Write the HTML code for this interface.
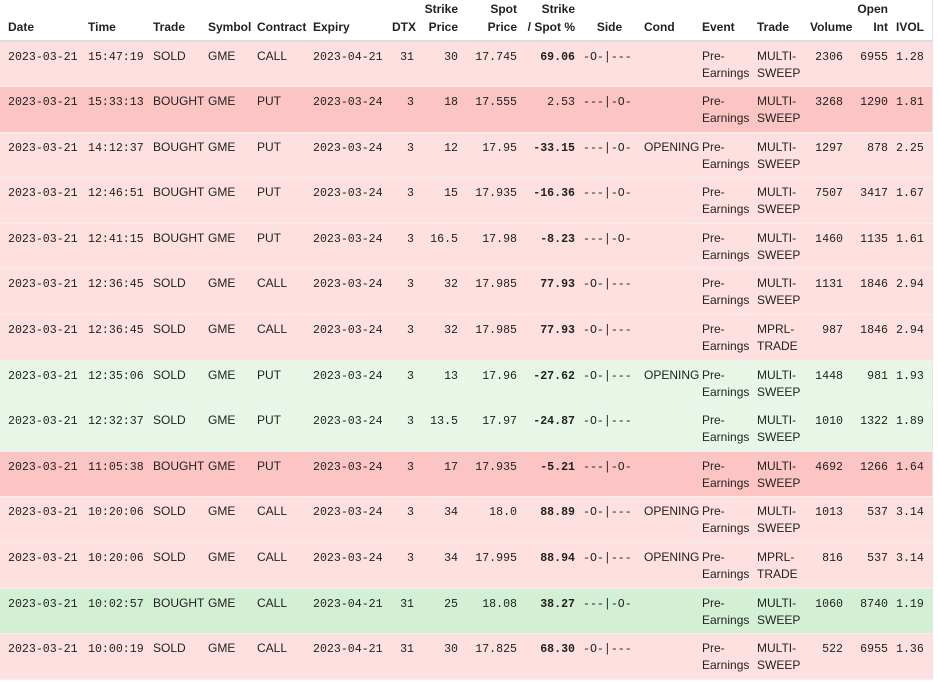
<!DOCTYPE html>
<html><head><meta charset="utf-8"><style>
body{margin:0;background:#fff;width:938px;height:682px;overflow:hidden}
table{border-collapse:collapse;table-layout:fixed;width:932px;font-family:"Liberation Sans",sans-serif;font-size:12px;color:#222;border-right:1px solid #e4e4e4}
th{font-weight:bold;vertical-align:bottom;padding:0 4px 4px 4px;line-height:18px;text-align:left;border-bottom:2px solid #ddd;white-space:nowrap}
td{height:45.6px;vertical-align:baseline;padding:6px 4px 0 4px;line-height:17px;box-sizing:border-box;border-bottom:1px solid #f0f0f0;white-space:nowrap}
td.m{font-family:"Liberation Mono",monospace;font-size:11.6px}
.r{text-align:right}
td.b{font-weight:bold}
th:first-child,td:first-child{padding-left:8px}
tr.lp td{background:#fde0df}
tr.sp td{background:#fcc5c4}
tr.lg td{background:#e8f6e8}
tr.sg td{background:#d4f0d4}
</style></head><body>
<table>
<colgroup><col style="width:84px"><col style="width:65px"><col style="width:55px"><col style="width:49px"><col style="width:56px"><col style="width:79px"><col style="width:30px"><col style="width:44px"><col style="width:59px"><col style="width:58px"><col style="width:61px"><col style="width:58px"><col style="width:55px"><col style="width:53px"><col style="width:41px"><col style="width:45px"><col style="width:40px"></colgroup>
<tr><th>Date</th><th>Time</th><th>Trade</th><th>Symbol</th><th>Contract</th><th>Expiry</th><th class="r">DTX</th><th class="r">Strike<br>Price</th><th class="r">Spot<br>Price</th><th class="r">Strike<br>/ Spot %</th><th style="text-align:center">Side</th><th>Cond</th><th>Event</th><th>Trade</th><th class="r">Volume</th><th class="r">Open<br>Int</th><th>IVOL</th></tr>
<tr class="lp"><td class="m">2023-03-21</td><td class="m">15:47:19</td><td>SOLD</td><td>GME</td><td>CALL</td><td class="m">2023-04-21</td><td class="m r">31</td><td class="m r">30</td><td class="m r">17.745</td><td class="m r b">69.06</td><td class="m">-O-|---</td><td></td><td>Pre-<br>Earnings</td><td>MULTI-<br>SWEEP</td><td class="m r">2306</td><td class="m r">6955</td><td class="m">1.28</td></tr>
<tr class="sp"><td class="m">2023-03-21</td><td class="m">15:33:13</td><td>BOUGHT</td><td>GME</td><td>PUT</td><td class="m">2023-03-24</td><td class="m r">3</td><td class="m r">18</td><td class="m r">17.555</td><td class="m r">2.53</td><td class="m">---|-O-</td><td></td><td>Pre-<br>Earnings</td><td>MULTI-<br>SWEEP</td><td class="m r">3268</td><td class="m r">1290</td><td class="m">1.81</td></tr>
<tr class="lp"><td class="m">2023-03-21</td><td class="m">14:12:37</td><td>BOUGHT</td><td>GME</td><td>PUT</td><td class="m">2023-03-24</td><td class="m r">3</td><td class="m r">12</td><td class="m r">17.95</td><td class="m r b">-33.15</td><td class="m">---|-O-</td><td>OPENING</td><td>Pre-<br>Earnings</td><td>MULTI-<br>SWEEP</td><td class="m r">1297</td><td class="m r">878</td><td class="m">2.25</td></tr>
<tr class="lp"><td class="m">2023-03-21</td><td class="m">12:46:51</td><td>BOUGHT</td><td>GME</td><td>PUT</td><td class="m">2023-03-24</td><td class="m r">3</td><td class="m r">15</td><td class="m r">17.935</td><td class="m r b">-16.36</td><td class="m">---|-O-</td><td></td><td>Pre-<br>Earnings</td><td>MULTI-<br>SWEEP</td><td class="m r">7507</td><td class="m r">3417</td><td class="m">1.67</td></tr>
<tr class="lp"><td class="m">2023-03-21</td><td class="m">12:41:15</td><td>BOUGHT</td><td>GME</td><td>PUT</td><td class="m">2023-03-24</td><td class="m r">3</td><td class="m r">16.5</td><td class="m r">17.98</td><td class="m r b">-8.23</td><td class="m">---|-O-</td><td></td><td>Pre-<br>Earnings</td><td>MULTI-<br>SWEEP</td><td class="m r">1460</td><td class="m r">1135</td><td class="m">1.61</td></tr>
<tr class="lp"><td class="m">2023-03-21</td><td class="m">12:36:45</td><td>SOLD</td><td>GME</td><td>CALL</td><td class="m">2023-03-24</td><td class="m r">3</td><td class="m r">32</td><td class="m r">17.985</td><td class="m r b">77.93</td><td class="m">-O-|---</td><td></td><td>Pre-<br>Earnings</td><td>MULTI-<br>SWEEP</td><td class="m r">1131</td><td class="m r">1846</td><td class="m">2.94</td></tr>
<tr class="lp"><td class="m">2023-03-21</td><td class="m">12:36:45</td><td>SOLD</td><td>GME</td><td>CALL</td><td class="m">2023-03-24</td><td class="m r">3</td><td class="m r">32</td><td class="m r">17.985</td><td class="m r b">77.93</td><td class="m">-O-|---</td><td></td><td>Pre-<br>Earnings</td><td>MPRL-<br>TRADE</td><td class="m r">987</td><td class="m r">1846</td><td class="m">2.94</td></tr>
<tr class="lg"><td class="m">2023-03-21</td><td class="m">12:35:06</td><td>SOLD</td><td>GME</td><td>PUT</td><td class="m">2023-03-24</td><td class="m r">3</td><td class="m r">13</td><td class="m r">17.96</td><td class="m r b">-27.62</td><td class="m">-O-|---</td><td>OPENING</td><td>Pre-<br>Earnings</td><td>MULTI-<br>SWEEP</td><td class="m r">1448</td><td class="m r">981</td><td class="m">1.93</td></tr>
<tr class="lg"><td class="m">2023-03-21</td><td class="m">12:32:37</td><td>SOLD</td><td>GME</td><td>PUT</td><td class="m">2023-03-24</td><td class="m r">3</td><td class="m r">13.5</td><td class="m r">17.97</td><td class="m r b">-24.87</td><td class="m">-O-|---</td><td></td><td>Pre-<br>Earnings</td><td>MULTI-<br>SWEEP</td><td class="m r">1010</td><td class="m r">1322</td><td class="m">1.89</td></tr>
<tr class="sp"><td class="m">2023-03-21</td><td class="m">11:05:38</td><td>BOUGHT</td><td>GME</td><td>PUT</td><td class="m">2023-03-24</td><td class="m r">3</td><td class="m r">17</td><td class="m r">17.935</td><td class="m r b">-5.21</td><td class="m">---|-O-</td><td></td><td>Pre-<br>Earnings</td><td>MULTI-<br>SWEEP</td><td class="m r">4692</td><td class="m r">1266</td><td class="m">1.64</td></tr>
<tr class="lp"><td class="m">2023-03-21</td><td class="m">10:20:06</td><td>SOLD</td><td>GME</td><td>CALL</td><td class="m">2023-03-24</td><td class="m r">3</td><td class="m r">34</td><td class="m r">18.0</td><td class="m r b">88.89</td><td class="m">-O-|---</td><td>OPENING</td><td>Pre-<br>Earnings</td><td>MULTI-<br>SWEEP</td><td class="m r">1013</td><td class="m r">537</td><td class="m">3.14</td></tr>
<tr class="lp"><td class="m">2023-03-21</td><td class="m">10:20:06</td><td>SOLD</td><td>GME</td><td>CALL</td><td class="m">2023-03-24</td><td class="m r">3</td><td class="m r">34</td><td class="m r">17.995</td><td class="m r b">88.94</td><td class="m">-O-|---</td><td>OPENING</td><td>Pre-<br>Earnings</td><td>MPRL-<br>TRADE</td><td class="m r">816</td><td class="m r">537</td><td class="m">3.14</td></tr>
<tr class="sg"><td class="m">2023-03-21</td><td class="m">10:02:57</td><td>BOUGHT</td><td>GME</td><td>CALL</td><td class="m">2023-04-21</td><td class="m r">31</td><td class="m r">25</td><td class="m r">18.08</td><td class="m r b">38.27</td><td class="m">---|-O-</td><td></td><td>Pre-<br>Earnings</td><td>MULTI-<br>SWEEP</td><td class="m r">1060</td><td class="m r">8740</td><td class="m">1.19</td></tr>
<tr class="lp"><td class="m">2023-03-21</td><td class="m">10:00:19</td><td>SOLD</td><td>GME</td><td>CALL</td><td class="m">2023-04-21</td><td class="m r">31</td><td class="m r">30</td><td class="m r">17.825</td><td class="m r b">68.30</td><td class="m">-O-|---</td><td></td><td>Pre-<br>Earnings</td><td>MULTI-<br>SWEEP</td><td class="m r">522</td><td class="m r">6955</td><td class="m">1.36</td></tr>
</table>
</body></html>
